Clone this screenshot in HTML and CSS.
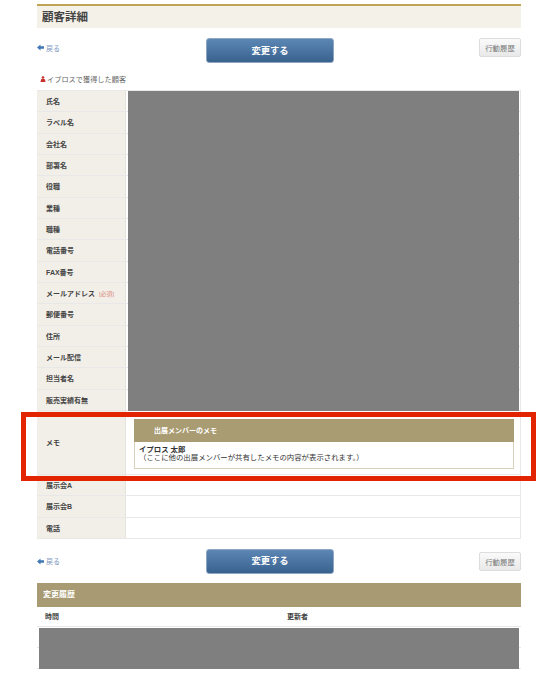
FILE: index.html
```html
<!DOCTYPE html>
<html lang="ja">
<head>
  <meta charset="UTF-8">
  <title>顧客詳細</title>
  <link rel="stylesheet" href="styles.css">
</head>
<body>
  <div class="page">
    <h1 class="title">顧客詳細</h1>

    <div class="toolbar">
      <a class="back" href="#">
        <svg class="back-icon" viewBox="0 0 8 8"><path d="M0 4 4 .5V2.600H8V5.400H4V7.500Z"/></svg>戻る
      </a>
      <button class="btn-save" type="button">変更する</button>
      <button class="btn-log" type="button">行動履歴</button>
    </div>

    <p class="note">
      <svg class="note-icon" viewBox="0 0 8 8"><circle cx="4" cy="2" r="1.800"/><path d="M.5 8 1.800 4H6.200L7.500 8Z"/></svg>イプロスで獲得した顧客
    </p>

    <div class="detail">
      <div class="row"><div class="label">氏名</div><div class="value"></div></div>
      <div class="row"><div class="label">ラベル名</div><div class="value"></div></div>
      <div class="row"><div class="label">会社名</div><div class="value"></div></div>
      <div class="row"><div class="label">部署名</div><div class="value"></div></div>
      <div class="row"><div class="label">役職</div><div class="value"></div></div>
      <div class="row"><div class="label">業種</div><div class="value"></div></div>
      <div class="row"><div class="label">職種</div><div class="value"></div></div>
      <div class="row"><div class="label">電話番号</div><div class="value"></div></div>
      <div class="row"><div class="label">FAX番号</div><div class="value"></div></div>
      <div class="row"><div class="label">メールアドレス <span class="required">[必須]</span></div><div class="value"></div></div>
      <div class="row"><div class="label">郵便番号</div><div class="value"></div></div>
      <div class="row"><div class="label">住所</div><div class="value"></div></div>
      <div class="row"><div class="label">メール配信</div><div class="value"></div></div>
      <div class="row"><div class="label">担当者名</div><div class="value"></div></div>
      <div class="row"><div class="label">販売実績有無</div><div class="value"></div></div>
      <div class="row row-memo">
        <div class="label">メモ</div>
        <div class="value">
          <div class="memo">
            <div class="memo-head">出展メンバーのメモ</div>
            <div class="memo-body">
              <strong>イプロス 太郎</strong><br>
              （ここに他の出展メンバーが共有したメモの内容が表示されます。）
            </div>
          </div>
        </div>
      </div>
      <div class="row"><div class="label">展示会A</div><div class="value"></div></div>
      <div class="row"><div class="label">展示会B</div><div class="value"></div></div>
      <div class="row"><div class="label">電話</div><div class="value"></div></div>

      <div class="mask mask-detail"></div>
      <div class="highlight"></div>
    </div>

    <div class="toolbar toolbar-bottom">
      <a class="back" href="#">
        <svg class="back-icon" viewBox="0 0 8 8"><path d="M0 4 4 .5V2.600H8V5.400H4V7.500Z"/></svg>戻る
      </a>
      <button class="btn-save" type="button">変更する</button>
      <button class="btn-log" type="button">行動履歴</button>
    </div>

    <h2 class="band">変更履歴</h2>
    <div class="history">
      <div class="history-head"><span>時間</span><span>更新者</span></div>
      <div class="history-row"></div>
      <div class="history-row"></div>
      <div class="mask mask-history"></div>
    </div>
  </div>
</body>
</html>
```

FILE: styles.css
```css
body {
  margin: 0;
  background: #fff;
  color: #444;
  font-family: "Liberation Sans", "Noto Sans CJK JP", sans-serif;
  font-size: 7px;
}
.page {
  width: 484px;
  margin-left: 37px;
  padding-top: 4px;
}
.title {
  margin: 0;
  height: 22px;
  padding-left: 5px;
  border-top: 2px solid #bfa552;
  background: #f4f1e8;
  color: #444;
  font-size: 11.500px;
  font-weight: bold;
  line-height: 23px;
}
.toolbar {
  display: flex;
  align-items: flex-start;
  height: 25px;
  margin-top: 10px;
}
.toolbar-bottom {
  margin-top: 10px;
}
.back {
  display: flex;
  align-items: center;
  gap: 2px;
  width: 169px;
  height: 19px;
  color: #7d97bd;
  text-decoration: none;
  font-size: 7px;
}
.back-icon {
  width: 7px;
  height: 7px;
  fill: #3f78b5;
}
.btn-save {
  width: 128px;
  height: 25px;
  padding: 0 0 2px;
  border: 1px solid #8fa6c2;
  border-radius: 3px;
  background: linear-gradient(#5c86b4, #39628f);
  color: #fff;
  font-family: inherit;
  font-size: 9.300px;
  font-weight: bold;
}
.btn-log {
  width: 42px;
  height: 19px;
  margin-left: auto;
  padding: 0;
  border: 1px solid #ddd;
  border-radius: 2px;
  background: linear-gradient(#fafafa, #e9e9e9);
  color: #777;
  font-family: inherit;
  font-size: 7.400px;
}
.toolbar-bottom .btn-log {
  margin-top: 3px;
}
.toolbar-bottom .back {
  height: 25px;
}
.note {
  display: flex;
  align-items: center;
  gap: 1px;
  height: 10px;
  margin: 11px 0 6px 2px;
  color: #666;
  font-size: 7.200px;
}
.note-icon {
  width: 6px;
  height: 6px;
  margin-left: 1px;
  fill: #c9302c;
}
.detail {
  position: relative;
  border-top: 1px solid #e8e8e8;
  border-right: 1px solid #e8e8e8;
}
.row {
  display: grid;
  grid-template-columns: 89px 1fr;
  height: 21.330px;
  border-bottom: 1px solid #e8e8e8;
  box-sizing: border-box;
}
.row-memo {
  height: 64px;
}
.label {
  display: flex;
  align-items: center;
  gap: 2px;
  padding-left: 9px;
  border-right: 1px solid #e6e3da;
  background: #f2efe8;
  color: #444;
  font-weight: bold;
  white-space: pre;
}
.required {
  color: #d98a80;
  font-weight: normal;
  font-size: 6px;
}
.memo {
  margin: 8px 6px 0 8px;
  height: 50px;
  box-sizing: border-box;
  border: 1px solid #d8d2bd;
  border-top: 0;
}
.memo-head {
  height: 23px;
  margin: 0 -1px;
  padding-left: 20px;
  background: #a99c73;
  color: #fff;
  font-weight: bold;
  line-height: 23px;
}
.memo-body {
  padding: 4px 0 0 4px;
  color: #333;
  font-size: 7.400px;
  line-height: 8px;
}
.mask {
  position: absolute;
  background: #7f7f7f;
}
.mask-detail {
  top: 0;
  left: 91px;
  width: 391px;
  height: 320px;
}
.highlight {
  position: absolute;
  top: 321px;
  left: -16px;
  width: 515px;
  height: 69px;
  box-sizing: border-box;
  border: 5px solid #e32400;
}
.band {
  margin: 9px 0 0;
  height: 24px;
  padding-left: 6px;
  background: #a89b73;
  color: #fff;
  font-size: 8px;
  font-weight: bold;
  line-height: 24px;
}
.history {
  position: relative;
}
.history-head {
  display: grid;
  grid-template-columns: 242px 1fr;
  height: 20px;
  padding-left: 8px;
  box-sizing: border-box;
  border-bottom: 1px solid #e8e8e8;
  font-weight: bold;
  line-height: 20px;
}
.history-row {
  height: 21px;
  border-bottom: 1px solid #e8e8e8;
  box-sizing: border-box;
}
.mask-history {
  top: 21px;
  left: 2px;
  width: 480px;
  height: 41px;
}
```
